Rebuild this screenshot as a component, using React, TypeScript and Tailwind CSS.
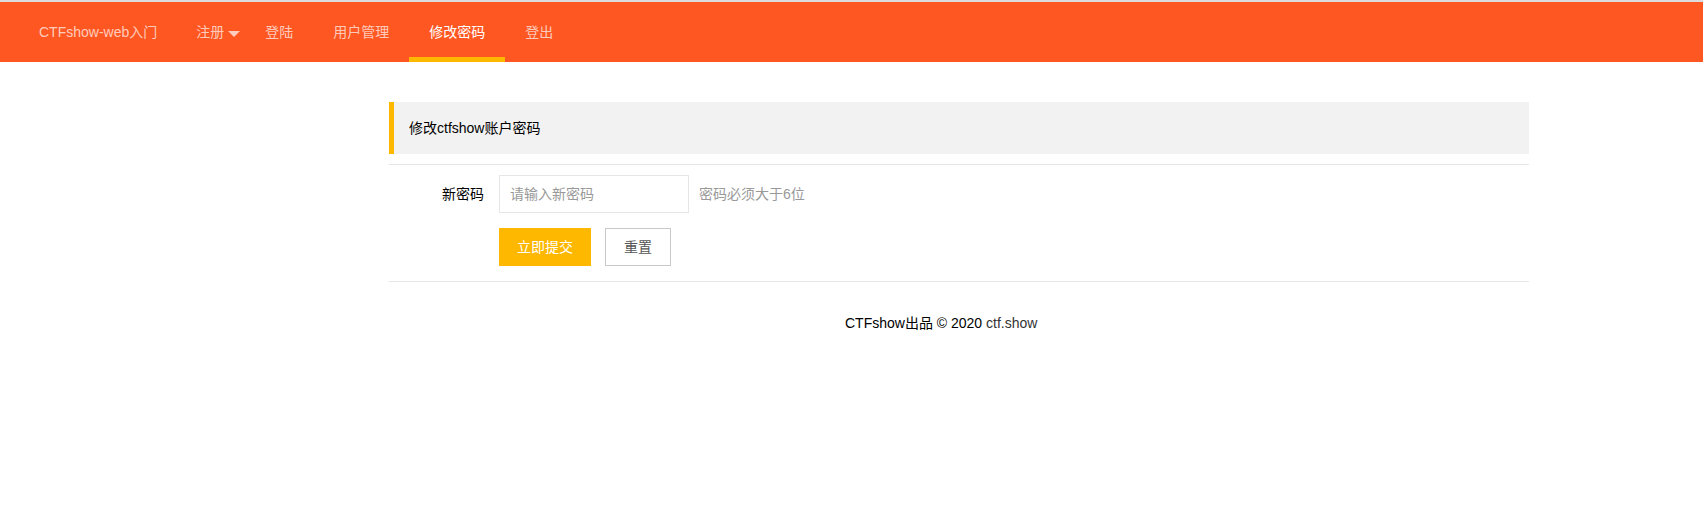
import { useState } from 'react';

const font = { fontFamily: '"Liberation Sans", Arial, "Noto Sans CJK SC", sans-serif' };

const NAV = [
  { label: '注册', more: true },
  { label: '登陆' },
  { label: '用户管理' },
  { label: '修改密码', active: true },
  { label: '登出' },
];

export default function App() {
  const [pwd, setPwd] = useState('');

  return (
    <div className="min-h-screen bg-white text-[14px] text-black" style={font}>
      {/* top nav */}
      <div className="border-t-2 border-[#dcdcdc] border-solid">
        <ul className="flex h-[60px] bg-[#FF5722] pl-[19px] pr-5 leading-[60px]">
          <li className="pl-5 pr-[19px] text-white/70">CTFshow-web入门</li>
          {NAV.map((item) => (
            <li
              key={item.label}
              className={
                'relative flex items-center pl-5 ' +
                (item.more ? 'pr-[5px] ' : 'pr-5 ') +
                (item.active ? 'text-white' : 'text-white/70')
              }
            >
              <span>{item.label}</span>
              {item.more && (
                <span className="ml-1 mt-[3px] h-0 w-0 border-x-[6px] border-t-[6px] border-x-transparent border-t-white/70" />
              )}
              {item.active && <span className="absolute bottom-0 left-0 h-[5px] w-full bg-[#FFB800]" />}
            </li>
          ))}
        </ul>
      </div>

      {/* content */}
      <div className="ml-[389px] mt-10 w-[1140px]">
        <div className="border-l-[5px] border-[#FFB800] bg-[#f2f2f2] py-[15px] pl-[15px] leading-[22px]">
          修改ctfshow账户密码
        </div>

        <div className="mt-[10px] border-t border-[#e6e6e6] pt-[10px] pb-[15px]">
          <div className="flex items-center">
            <label className="w-[110px] pr-[15px] text-right">新密码</label>
            <input
              value={pwd}
              onChange={(e) => setPwd(e.target.value)}
              type="password"
              placeholder="请输入新密码"
              className="h-[38px] w-[190px] border border-[#e6e6e6] bg-white pl-[10px] outline-none placeholder:text-[#999]"
              style={font}
            />
            <span className="ml-[10px] text-[#999]">密码必须大于6位</span>
          </div>
          <div className="mt-[15px] flex pl-[110px]">
            <button className="h-[38px] bg-[#FFB800] px-[18px] text-white" style={font}>
              立即提交
            </button>
            <button
              className="ml-[14px] h-[38px] border border-[#c9c9c9] bg-white px-[18px] text-[#555]"
              style={font}
              onClick={() => setPwd('')}
            >
              重置
            </button>
          </div>
        </div>

        <div className="border-t border-[#e6e6e6]" />

        <div className="ml-[456px] mt-[31px] leading-[20px]">
          CTFshow出品 © 2020 <a className="text-[#333]">ctf.show</a>
        </div>
      </div>
    </div>
  );
}
